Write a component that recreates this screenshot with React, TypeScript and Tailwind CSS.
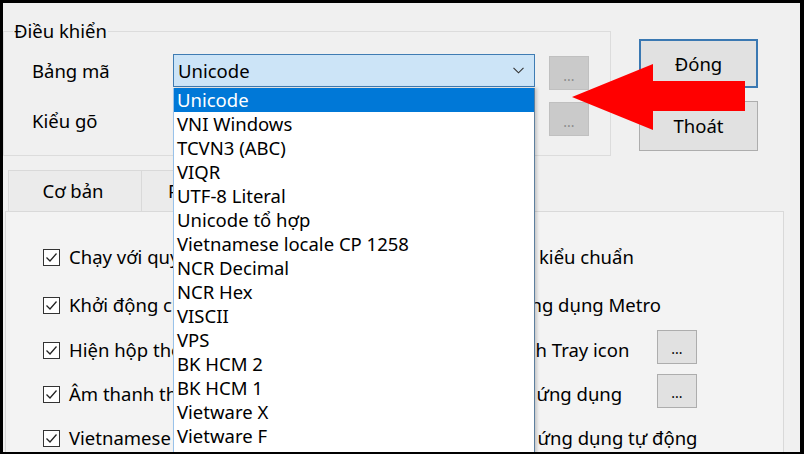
import React from 'react';

const encodings = [
  'Unicode',
  'VNI Windows',
  'TCVN3 (ABC)',
  'VIQR',
  'UTF-8 Literal',
  'Unicode tổ hợp',
  'Vietnamese locale CP 1258',
  'NCR Decimal',
  'NCR Hex',
  'VISCII',
  'VPS',
  'BK HCM 2',
  'BK HCM 1',
  'Vietware X',
  'Vietware F',
  'VNI Mac',
];

const options = [
  { left: 'Chạy với quyền Admin', right: 'Bật icon kiểu chuẩn', button: false, gap: 'mt-0' },
  { left: 'Khởi động cùng Windows', right: 'Sửa ở ứng dụng Metro', button: false, gap: 'mt-[16px]' },
  { left: 'Hiện hộp thoại khi khởi động', right: 'Tùy chỉnh Tray icon', button: true, gap: 'mt-[13px]' },
  { left: 'Âm thanh thông báo', right: 'Loại trừ ứng dụng', button: true, gap: 'mt-[12px]' },
  { left: 'Vietnamese icon', right: 'Ghi nhớ ứng dụng tự động', button: false, gap: 'mt-[12px]' },
];

const Checkbox = () => (
  <div className="w-[17px] h-[17px] shrink-0 border border-[#333333] bg-white flex items-center justify-center">
    <svg width="13" height="11" viewBox="0 0 13 11" fill="none">
      <path d="M1.5 5.5 L5 9 L11.5 1.5" stroke="#222222" strokeWidth="1.3" />
    </svg>
  </div>
);

const DotsButton = ({ disabled }: { disabled?: boolean }) => (
  <div
    className={`w-[40px] h-[34px] shrink-0 border flex items-center justify-center text-[14px] ${
      disabled ? 'bg-[#cacaca] border-[#c0c0c0] text-[#8c8c8c] pt-[4px]' : 'bg-[#e1e1e1] border-[#adadad] text-black pt-[2px]'
    }`}
  >
    ...
  </div>
);

const Chevron = () => (
  <svg width="11" height="7" viewBox="0 0 11 7" fill="none">
    <path d="M0.5 0.8 L5.5 5.8 L10.5 0.8" stroke="#333333" strokeWidth="1.1" />
  </svg>
);

export default function App() {
  return (
    <div className="w-[804px] h-[454px] relative overflow-hidden border-black border-t-[3px] border-l-[3px] border-r-[4px] border-b-[2px] bg-[#f0f0f0] text-black text-[18.5px] font-['Noto_Sans',sans-serif]">
      {/* top: group box + buttons */}
      <div className="flex items-start">
        <fieldset className="mt-[15px] w-[608px] h-[138px] border border-[#dcdcdc]">
          <legend className="ml-[9px] px-[1px] leading-[26px]">Điều khiển</legend>
          <div className="flex items-start mt-[10px] pl-[28px]">
            <div className="w-[141px] h-[33px] flex items-center">Bảng mã</div>
            <div className="w-[362px] h-[33px] border border-[#3f7cb3] bg-[#cce4f7] flex items-center justify-between pl-[4px] pr-[10px]">
              <span>Unicode</span>
              <Chevron />
            </div>
            <div className="ml-[14px] mt-[2px]">
              <DotsButton disabled />
            </div>
          </div>
          <div className="flex items-start mt-[12px] pl-[28px]">
            <div className="w-[141px] h-[38px] flex items-center">Kiểu gõ</div>
            <div className="w-[362px] h-[33px] mt-[1px] border border-[#adadad] bg-[#e5e5e5] flex items-center justify-between pl-[4px] pr-[10px]">
              <span>Telex</span>
              <Chevron />
            </div>
            <div className="ml-[14px]">
              <DotsButton disabled />
            </div>
          </div>
        </fieldset>
        <div className="ml-[28px] mt-[36px] flex flex-col gap-[13px]">
          <div className="w-[119px] h-[49px] border-2 border-[#3a78b2] bg-[#e1e1e1] flex items-center justify-center">Đóng</div>
          <div className="w-[119px] h-[50px] border border-[#adadad] bg-[#e1e1e1] flex items-center justify-center">Thoát</div>
        </div>
      </div>

      {/* tabs */}
      <div className="flex mt-[14px] pl-[5px]">
        <div className="w-[134px] h-[41px] border-t border-l border-r border-[#d9d9d9] bg-[#ebebeb] flex items-center justify-center pr-[4px]">Cơ bản</div>
        <div className="w-[134px] h-[41px] border-t border-r border-[#d9d9d9] bg-[#ebebeb] flex items-center pl-[26px]">Phím tắt</div>
        <div className="w-[134px] h-[41px] border-t border-r border-[#d9d9d9] bg-[#ebebeb] flex items-center justify-center">Gõ tắt</div>
      </div>

      {/* panel */}
      <div className="ml-[2px] w-[779px] h-[260px] border border-[#d9d9d9] bg-[#f3f3f3] pt-[29px]">
        {options.map((o) => (
          <div key={o.left} className={`flex items-start h-[32px] ${o.gap}`}>
            <div className="w-[432px] h-[32px] pl-[37px] flex items-center gap-[9px] whitespace-nowrap">
              <Checkbox />
              <span>{o.left}</span>
            </div>
            <div className="h-[32px] flex items-center gap-[9px] whitespace-nowrap">
              <Checkbox />
              <span className="w-[193px]">{o.right}</span>
            </div>
            {o.button && (
              <div className="-mt-[4px]">
                <DotsButton />
              </div>
            )}
          </div>
        ))}
      </div>

      {/* open drop-down list */}
      <div className="absolute left-[170px] top-[85px] w-[362px] h-[380px] bg-white border-l border-l-[#99c2ea] border-r border-r-[#5d7f9e] shadow-[2px_0_3px_rgba(0,0,0,0.18)]">
        {encodings.map((e, i) => (
          <div
            key={e}
            className={`h-[24px] leading-[24px] pl-[3px] whitespace-nowrap ${i === 0 ? 'bg-[#0078d7] text-white' : ''}`}
          >
            {e}
          </div>
        ))}
      </div>

      {/* red arrow annotation */}
      <svg className="absolute left-[567px] top-[57px]" width="178" height="72" viewBox="0 0 178 72">
        <polygon points="2,37 83,4 83,21 175,21 175,51 83,51 83,70" fill="#ff0000" />
      </svg>
    </div>
  );
}
